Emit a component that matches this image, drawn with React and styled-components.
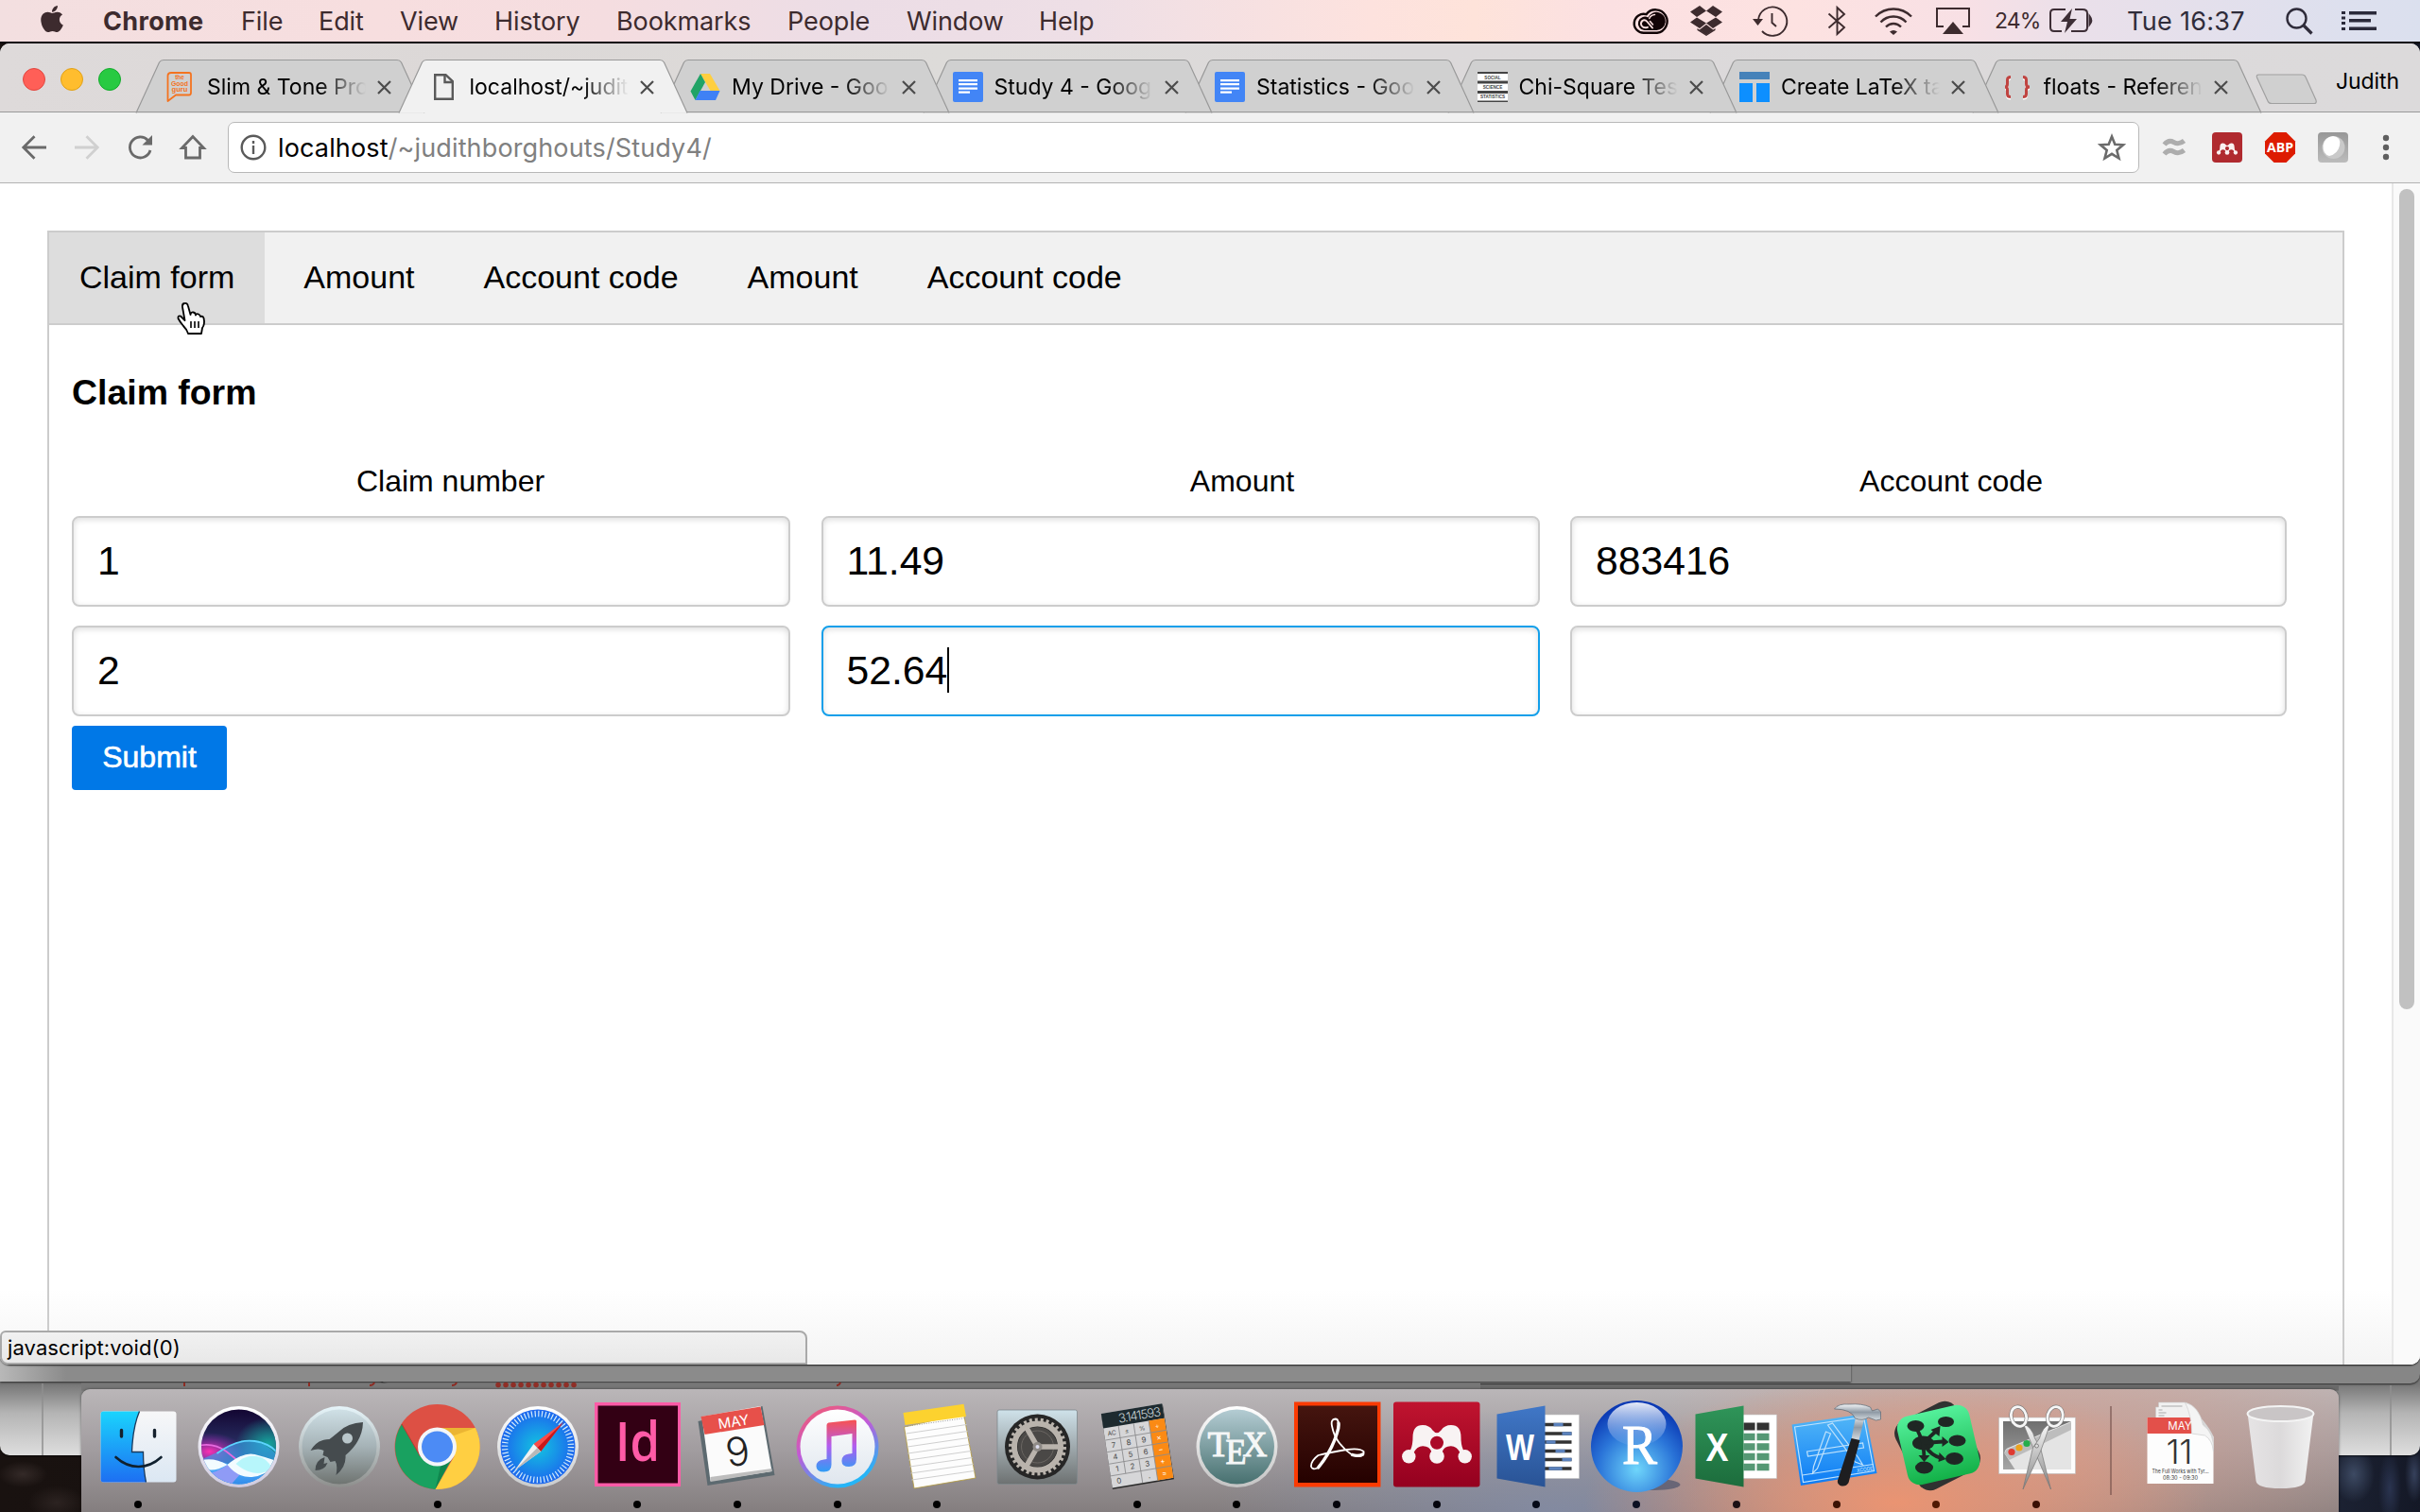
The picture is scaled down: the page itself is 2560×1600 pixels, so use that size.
import React from "react";
import styled, { createGlobalStyle, css } from "styled-components";
import { FaApple } from "react-icons/fa";

const UI_FONT = `Inter, "Noto Sans", sans-serif`;
const PAGE_FONT = `"Liberation Sans", Arial, sans-serif`;

const GlobalStyle = createGlobalStyle`
  html, body { margin: 0; padding: 0; overflow: hidden; }
  * { box-sizing: border-box; }
  svg { display: block; overflow: visible; }
`;

/* ---------- Desktop ---------- */

const Desktop = styled.div`
  position: relative;
  width: 2560px;
  height: 1600px;
  overflow: hidden;
  background:
    radial-gradient(ellipse 26px 14px at 24px 1560px, #342a28 0, transparent 100%),
    radial-gradient(ellipse 30px 18px at 60px 1590px, #2c2321 0, transparent 100%),
    radial-gradient(ellipse 22px 30px at 2490px 1560px, #3d4a63 0, transparent 100%),
    radial-gradient(ellipse 12px 40px at 2528px 1575px, #2a3450 0, transparent 100%),
    radial-gradient(ellipse 10px 30px at 2554px 1560px, #36415c 0, transparent 100%),
    linear-gradient(90deg, #191210 0, #120d0c 1280px, #1c2233 2470px, #141826 2560px);
`;

const BackWindow = styled.div`
  position: absolute;
  left: ${(p) => p.$x}px;
  top: 1300px;
  width: ${(p) => p.$w}px;
  height: ${(p) => p.$bottom - 1300}px;
  background: ${(p) => p.$bg};
  border-radius: ${(p) => p.$radius || "0 0 10px 10px"};
  box-shadow: 0 1px 2px rgba(0, 0, 0, 0.65);
`;

const Peek = styled.svg`
  position: absolute;
  left: 0;
  top: 1440px;
`;

const Window = styled.main`
  position: relative;
  width: 2560px;
  height: 1398px;
  display: flex;
  flex-direction: column;
  background: #fff;
  border-radius: 10px 10px 10px 10px;
  overflow: hidden;
`;

const WindowShade = styled.div`
  position: absolute;
  left: 0;
  top: 46px;
  width: 2560px;
  height: 1398px;
  border-radius: 10px;
  box-shadow: 0 1px 2px rgba(0, 0, 0, 0.8);
`;

/* ---------- Menu bar ---------- */

const MenuBar = styled.header`
  height: 46px;
  display: flex;
  align-items: center;
  border-bottom: 2px solid #08030a;
  background: linear-gradient(90deg, #f3dfe0 0, #f7dedf 400px, #f5dde0 640px, #ecdde6 900px, #eedfe6 1150px,
    #fde2de 1450px, #fee3da 1560px, #fbe0e2 1700px, #fde2e1 1900px, #f8e0e5 2080px, #eae0ea 2200px, #dde0ee 2480px, #dbe0ee 2560px);
  font: 27px/44px ${UI_FONT};
  color: #3d2b2e;
  white-space: nowrap;
`;

const AppleMark = styled.div`
  width: 109px;
  padding: 0 0 4px 39px;
  svg { width: 32px; height: 32px; }
`;

const MenuItem = styled.span`
  flex: none;
  width: ${(p) => p.$w}px;
  padding-top: 1px;
  letter-spacing: ${(p) => (p.$bold ? 0.35 : -0.1)}px;
  font-weight: ${(p) => (p.$bold ? 700 : 400)};
`;

const Extras = styled.div`
  margin-left: auto;
  padding-right: 30px;
  display: flex;
  align-items: center;
  height: 44px;
`;

const Extra = styled.div`
  flex: none;
  width: ${(p) => p.$w}px;
  display: flex;
  justify-content: center;
`;

const Percent = styled.span`
  width: 58px;
  padding-left: 8px;
  font-size: 23px;
  letter-spacing: -0.9px;
`;

const Clock = styled.span`
  width: 182px;
  padding: 1px 0 0 28px;
  color: #2f2c3a;
  letter-spacing: 0.3px;
`;

/* ---------- Tab strip ---------- */

const TabStrip = styled.div`
  flex: none;
  height: 73px;
  padding: 17px 0 0 144px;
  display: flex;
  position: relative;
  background: linear-gradient(90deg, #dedada 0, #dcd8d7 500px, #dddbd9 1000px, #dcd9da 1500px, #dcdadb 2560px);
  box-shadow: inset 0 -1px 0 #999;
`;

const Lights = styled.div`
  position: absolute;
  left: 24px;
  top: 26px;
  display: flex;
  gap: 16px;
`;

const Light = styled.i`
  width: 24px;
  height: 24px;
  border-radius: 50%;
  background: ${(p) => p.$c};
  border: 1px solid ${(p) => p.$b};
`;

const TabBox = styled.div`
  position: relative;
  flex: none;
  width: 305px;
  height: 56px;
  margin-right: -27.5px;
  padding-left: 31px;
  display: flex;
  align-items: center;
  z-index: ${(p) => p.$z};
`;

const TabShape = styled.svg`
  position: absolute;
  inset: 0;
`;

const TabIcon = styled.div`
  position: relative;
  width: 32px;
  height: 32px;
  margin: 2px 12px 0 0;
`;

const TabTitle = styled.span`
  position: relative;
  width: 171px;
  padding-top: 1px;
  white-space: nowrap;
  font: 23px/40px ${UI_FONT};
  letter-spacing: 0;
  color: #000;
  mask-image: linear-gradient(90deg, #000 118px, transparent 168px);
`;

const TabClose = styled.svg`
  position: relative;
  margin: 2px 0 0 9px;
`;

const NewTab = styled.svg`
  margin: 15px 0 0 22px;
`;

const Profile = styled.span`
  margin-left: auto;
  padding: 2px 22px 0 0;
  font: 23px/42px ${UI_FONT};
  letter-spacing: -0.1px;
`;

/* ---------- Toolbar ---------- */

const Toolbar = styled.div`
  flex: none;
  height: 75px;
  padding: 0 8px;
  display: flex;
  align-items: center;
  background: #f1f1f1;
  border-bottom: 1px solid #b3b3b3;
`;

const ToolButton = styled.div`
  flex: none;
  width: 56px;
  display: flex;
  justify-content: center;
`;

const Omnibox = styled.div`
  flex: none;
  width: 2022px;
  height: 54px;
  margin: 0 9px 0 9px;
  padding: 0 13px 0 12px;
  display: flex;
  align-items: center;
  background: #fff;
  border: 1.5px solid #b8b8b8;
  border-radius: 7px;
`;

const Address = styled.span`
  flex: 1;
  padding: 2px 0 0 12px;
  font: 27px/46px ${UI_FONT};
  letter-spacing: 0.14px;
  color: #000;
  em { font-style: normal; color: #808080; }
`;

/* ---------- Page ---------- */

const Viewport = styled.div`
  flex: 1;
  display: flex;
  background: linear-gradient(180deg, #fff 0, #fff 1170px, #f4f4f4 1250px);
`;

const Page = styled.div`
  width: 2530px;
  padding: 50px 0 0 50px;
  display: flex;
  flex-direction: column;
  font: 32px/40px ${PAGE_FONT};
  color: #000;
`;

const ScrollTrack = styled.div`
  width: 30px;
  padding: 6px 0 0 6px;
  border-left: 2px solid #e8e8e8;
  background: #fafafa;
`;

const ScrollThumb = styled.div`
  width: 16px;
  height: 868px;
  border-radius: 8px;
  background: #c1c1c1;
`;

const PageTabs = styled.nav`
  width: 2430px;
  height: 100px;
  display: flex;
  gap: 9px;
  border: 2px solid #ccc;
  background: #f1f1f1;
`;

const PageTab = styled.a`
  position: relative;
  height: 96px;
  padding: 0 32px;
  font-size: 34px;
  line-height: 95px;
  background: ${(p) => (p.$active ? "#ddd" : "transparent")};
`;

const HandCursor = styled.svg`
  position: absolute;
  left: 134px;
  top: 73px;
  z-index: 2;
`;

const Panel = styled.section`
  flex: 1;
  width: 2430px;
  padding: 49px 0 0 24px;
  border: 2px solid #ccc;
  border-width: 0 2px;
`;

const Title = styled.h3`
  margin: 0 0 52px;
  font-size: 37.44px;
  line-height: 44px;
  font-weight: 700;
`;

const HeadRow = styled.div`
  display: grid;
  grid-template-columns: 801px 874px 626px;
  height: 57px;
  text-align: center;
`;

const FieldGrid = styled.div`
  display: grid;
  grid-template-columns: 760px 760px 758px;
  column-gap: 32.5px;
  row-gap: 20px;
  margin-bottom: 10px;
`;

const Field = styled.div`
  height: 96px;
  padding: 0 25px 3px;
  display: flex;
  align-items: center;
  font-size: 42.67px;
  border: 2px solid #ccc;
  border-radius: 8px;
  box-shadow: inset 0 2px 6px #ddd;
  ${(p) => p.$focused && css`border-color: #129fea;`}
`;

const Caret = styled.i`
  width: 2px;
  height: 48px;
  background: #000;
`;

const Submit = styled.button`
  width: 164px;
  height: 68px;
  padding: 0 0 2px;
  border: 0;
  border-radius: 4px;
  background: #0078e7;
  color: #fff;
  font: 32px/64px ${PAGE_FONT};
  -webkit-text-stroke: 0.6px #fff;
`;

const StatusBubble = styled.div`
  position: absolute;
  left: 0;
  top: 1408px;
  width: 854px;
  height: 36px;
  padding-left: 6px;
  border: 2px solid #a9a9a9;
  border-radius: 6px 8px 0 8px;
  background: linear-gradient(180deg, #f1f1f1, #e8e8e8);
  font: 22px/33px ${UI_FONT};
  letter-spacing: 0.1px;
  color: #000;
`;

/* ---------- Dock ---------- */

const DockBar = styled.footer`
  position: absolute;
  left: 86px;
  top: 1470px;
  width: 2388px;
  height: 130px;
  padding-left: 7px;
  display: flex;
  border-radius: 9px 9px 0 0;
  background:
    radial-gradient(ellipse 330px 130px at 1920px 120px, #ea9472 0, rgba(228, 148, 118, 0.75) 35%, rgba(220, 160, 140, 0) 100%),
    radial-gradient(ellipse 420px 200px at 2080px 70px, rgba(214, 160, 145, 0.8) 0, rgba(214, 160, 145, 0) 100%),
    radial-gradient(ellipse 360px 110px at 1560px 130px, rgba(130, 142, 172, 0.75) 0, rgba(130, 142, 172, 0) 100%),
    linear-gradient(180deg, #bab6b8 0, #a19c9f 50%, #847e7f 100%);
  box-shadow: 0 0 3px rgba(0, 0, 0, 0.5);
`;

const DockItem = styled.div`
  flex: none;
  width: ${(p) => p.$w || 105.7}px;
  display: flex;
  flex-direction: column;
  align-items: center;
`;

const RunDot = styled.i`
  width: 8px;
  height: 8px;
  margin-top: 6px;
  border-radius: 50%;
  background: ${(p) => p.$c || "#000"};
`;

const Divider = styled.div`
  flex: none;
  width: 2px;
  height: 94px;
  margin: 18px 20px 0 24.8px;
  background: rgba(110, 75, 70, 0.55);
`;

/* ---------- Menu bar glyphs ---------- */

const CreativeCloud = () => (
  <svg width="38" height="27" viewBox="0 0 38 27" fill="none">
    <path d="M12 25.800H26A12.300 12.300 0 1 0 14.500 6.200 A10 10 0 1 0 12 25.800Z" stroke="#120406" strokeWidth="2.400" />
    <path d="M12.500 23H25.500A9.600 9.600 0 1 0 16.500 9.500 A7.200 7.200 0 1 0 12.500 23Z" fill="#120406" />
    <path d="M16 19.800Q12 21.300 9.800 18.500Q7.800 15.500 10.300 13Q13 11 15.500 14L21 20.500" stroke="#fde2e1" strokeWidth="1.900" strokeLinecap="round" />
    <path d="M17.800 10.500Q19.500 6.800 23.500 6.500" stroke="#fde2e1" strokeWidth="1.500" strokeLinecap="round" />
    <path d="M18.500 13.500L21.500 17" stroke="#fde2e1" strokeWidth="1.500" strokeLinecap="round" />
  </svg>
);

const Dropbox = () => (
  <svg width="34" height="32" viewBox="0 0 34 32" fill="#3d2b2e">
    <path d="M10 0L17 5.500 7 12 0 6.500Z M24 0L34 6.500 27 12 17 5.500Z M7 12.500L17 18.500 10 24 0 17.500Z M27 12.500L34 17.500 24 24 17 18.500Z M17 20L24.500 25.800 17 31 9.500 25.800Z" />
    <path d="M7.500 24L17 30.500 26.500 24V26L17 32 7.500 26Z" />
  </svg>
);

const TimeMachine = () => (
  <svg width="37" height="33" viewBox="0 0 37 33" fill="none" stroke="#3d2b2e" strokeWidth="1.900">
    <path d="M6 15A15.200 15.200 0 1 1 10 27" />
    <path d="M0 14H11L5.500 21Z" fill="#3d2b2e" stroke="none" />
    <path d="M20.500 8V18L25 22" />
  </svg>
);

const BluetoothGlyph = () => (
  <svg width="18" height="32" viewBox="0 0 18 32" fill="none" stroke="#3d2b2e" strokeWidth="1.900">
    <path d="M0.500 8.500L17 23 9.500 30V2L17 9 0.500 23.500" />
  </svg>
);

const WifiGlyph = () => (
  <svg width="40" height="29" viewBox="0 0 40 29" fill="none" stroke="#3d2b2e" strokeWidth="2.400">
    <path d="M1 9.500Q9 1.500 20 1.500T39 9.500" />
    <path d="M6.500 15.500Q12 9.500 20 9.500T33.500 15.500" />
    <path d="M12 20.500Q15.500 17 20 17T28 20.500" />
    <path d="M16 25.500Q20 22.500 24 25.500L20 29Z" fill="#3d2b2e" stroke="none" />
  </svg>
);

const AirPlay = () => (
  <svg width="36" height="28" viewBox="0 0 36 28">
    <path d="M8 20H1V1H35V20H28" fill="none" stroke="#3d2b2e" strokeWidth="2" />
    <path d="M18 15L29 28H7Z" fill="#3d2b2e" />
  </svg>
);

const Battery = () => (
  <svg width="46" height="26" viewBox="0 0 46 26" fill="none" stroke="#3d2e36" strokeWidth="2">
    <path d="M17 1H5Q1 1 1 5V20Q1 24 5 24H13M27 1H35Q40 1 40 5V20Q40 24 36 24H23" />
    <path d="M42.500 8Q46 12.500 42.500 17Z" fill="#3d2e36" />
    <path d="M24 0L12 14H19L16 26L29 11H21.500Z" fill="#3d2e36" stroke="none" />
  </svg>
);

const SearchGlyph = () => (
  <svg width="29" height="29" viewBox="0 0 29 29" fill="none" stroke="#2f2c3a" strokeWidth="2.400">
    <circle cx="11.500" cy="11.500" r="10" />
    <path d="M18.500 18.500L27.500 27.500" strokeWidth="3.200" />
  </svg>
);

const ListGlyph = () => (
  <svg width="37" height="20" viewBox="0 0 37 20" fill="#2a2a3a">
    <path d="M0 0H4V3H0Z M0 5.500H4V8.500H0Z M0 11H4V14H0Z M0 17H4V20H0Z M8 0H37V3.500H8Z M8 8H31V11.500H8Z M8 16.500H37V20H8Z" />
  </svg>
);

/* ---------- Browser glyphs ---------- */

const GoodGuru = () => (
  <svg width="32" height="32" viewBox="0 0 32 32">
    <path d="M6 1H25Q27 1 27 3V22Q27 24.500 25 24.500H11L2.500 31V4Q2.500 1 6 1Z" fill="none" stroke="#f4731f" strokeWidth="1.800" strokeLinejoin="round" />
    <g fill="#f4731f" fontFamily={PAGE_FONT} fontWeight="700" textAnchor="middle">
      <text x="15" y="8.200" fontSize="6.500">the</text>
      <text x="15" y="14.500" fontSize="7.500" textLength="18" lengthAdjust="spacingAndGlyphs">Good</text>
      <text x="15" y="20.500" fontSize="8" textLength="17" lengthAdjust="spacingAndGlyphs">guru</text>
    </g>
  </svg>
);

const FileGlyph = () => (
  <svg width="32" height="32" viewBox="0 0 32 32" fill="none" stroke="#5a5a5a" strokeWidth="2.400">
    <path d="M7.200 3.200H18.500L25.800 10V28.800H7.200Z" />
    <path d="M17.500 3.500V11H25.500" />
  </svg>
);

const DriveGlyph = () => (
  <svg width="32" height="32" viewBox="0 0 32 32">
    <path d="M11 2H21L31.500 20H21.500Z" fill="#ffcf3f" />
    <path d="M11 2L0.500 20.500 5.500 30 16 11Z" fill="#21a366" />
    <path d="M10.500 20H31.500L27 30H5.500Z" fill="#3f81f5" />
  </svg>
);

const DocsGlyph = () => (
  <svg width="32" height="32" viewBox="0 0 32 32">
    <rect width="32" height="32" rx="2" fill="#4285f6" />
    <path d="M6 8H26V10.200H6ZM6 12H26V14.200H6ZM6 16.500H26V18.700H6ZM6 20.500H18V22.700H6Z" fill="#fff" />
  </svg>
);

const SocialScience = () => (
  <svg width="32" height="32" viewBox="0 0 32 32">
    <rect width="32" height="32" fill="#fff" />
    <path d="M0 0H32V2H0ZM0 9.500H32V12.500H0ZM0 20H32V23H0ZM0 30.500H32V32H0Z" fill="#444" />
    <g fill="#444" fontFamily={PAGE_FONT} fontWeight="700" textAnchor="middle" fontSize="4.600">
      <text x="16" y="7.600">SOCIAL</text>
      <text x="16" y="18">SCIENCE</text>
      <text x="16" y="28.400">STATISTICS</text>
    </g>
  </svg>
);

const TablesGlyph = () => (
  <svg width="32" height="32" viewBox="0 0 32 32">
    <rect width="32" height="8" fill="#4682b9" />
    <rect y="12" width="14" height="20" fill="#0d8fff" />
    <rect x="18" y="12" width="14" height="20" fill="#0d8fff" />
  </svg>
);

const Braces = () => (
  <svg width="32" height="32" viewBox="0 0 32 32" fill="none" strokeWidth="3">
    <g stroke="#fff" transform="translate(0 1.500)">
      <path d="M9 5.500Q5.500 5.500 5.500 8.500V13Q5.500 16 3 16Q5.500 16 5.500 19V23.500Q5.500 26.500 9 26.500" />
      <path d="M22 5.500Q25.500 5.500 25.500 8.500V13Q25.500 16 29 16Q25.500 16 25.500 19V23.500Q25.500 26.500 22 26.500" />
    </g>
    <g stroke="#c04441">
      <path d="M9 5.500Q5.500 5.500 5.500 8.500V13Q5.500 16 3 16Q5.500 16 5.500 19V23.500Q5.500 26.500 9 26.500" />
      <path d="M22 5.500Q25.500 5.500 25.500 8.500V13Q25.500 16 29 16Q25.500 16 25.500 19V23.500Q25.500 26.500 22 26.500" />
    </g>
  </svg>
);

const Arrow = ({ flip, color }) => (
  <svg width="26" height="26" viewBox="0 0 26 26" fill="none" stroke={color} strokeWidth="2.800" transform={flip ? "scale(-1 1)" : undefined}>
    <path d="M13.500 1.200L1.800 13 13.500 24.800M1.800 13H26" />
  </svg>
);

const Reload = () => (
  <svg width="28" height="28" viewBox="0 0 28 28">
    <path d="M22.500 6.500A11 11 0 1 0 25 17" fill="none" stroke="#6a6a6a" strokeWidth="2.800" />
    <path d="M27 1V11.500H16.500Z" fill="#6a6a6a" />
  </svg>
);

const Home = () => (
  <svg width="28" height="28" viewBox="0 0 28 28" fill="none" stroke="#6a6a6a" strokeWidth="2.800">
    <path d="M14 2.500L2.500 14.500H6.500V25H21.500V14.500H25.500Z" />
  </svg>
);

const Info = () => (
  <svg width="28" height="28" viewBox="0 0 28 28" fill="none" stroke="#5a5a5a" strokeWidth="2.400">
    <circle cx="14" cy="14" r="12.300" />
    <path d="M14 12V21M14 7V10" />
  </svg>
);

const Star = () => (
  <svg width="30" height="30" viewBox="0 0 30 30" fill="none" stroke="#6b6b6b" strokeWidth="2.600">
    <path d="M15 3.500L18.300 11.700 27 12.300 20.300 18 22.500 26.500 15 21.800 7.500 26.500 9.700 18 3 12.300 11.700 11.700Z" />
  </svg>
);

const Waves = () => (
  <svg width="24" height="22" viewBox="0 0 24 22" fill="none" stroke="#adadad" strokeWidth="5">
    <path d="M1.500 8Q6 2.500 11.500 5.500T22.500 4" />
    <path d="M1.500 18Q6 12.500 11.500 15.500T22.500 14" />
  </svg>
);

const MendeleyMark = ({ fill, hole }) => (
  <g>
    <path
      d="M-25.500 -7Q-25.500 -20-15 -20Q-8 -20-4.500 -14.500Q0 -9 4.500 -14.500Q8 -20 15 -20Q25.500 -20 25.500 -7Q25.500 3 29 8L24.500 9Q21 2.500 15 2.200Q8 2 5.500 8.500H-5.500Q-8 2-15 2.200Q-21 2.500-24.500 9L-29 8Q-25.500 3-25.500 -7Z"
      fill={fill}
    />
    <circle cx="-29.700" cy="13.300" r="7.200" fill={fill} />
    <circle cx="0" cy="13" r="7.800" fill={fill} />
    <circle cx="29.700" cy="13.300" r="7.200" fill={fill} />
    <circle cx="0" cy="-1.300" r="7" fill={hole} />
  </g>
);

const MendeleyExt = () => (
  <svg width="32" height="32" viewBox="0 0 32 32">
    <rect width="32" height="32" rx="4" fill="#b02a2f" />
    <g transform="translate(16 17.500) scale(0.300)"><MendeleyMark fill="#faf0f0" hole="#b02a2f" /></g>
  </svg>
);

const AdblockExt = () => (
  <svg width="32" height="32" viewBox="0 0 32 32">
    <path d="M9.500 0H22.500L32 9.500V22.500L22.500 32H9.500L0 22.500V9.500Z" fill="#dd1c00" />
    <text x="16" y="21.300" textAnchor="middle" fontFamily={`"Open Sans", sans-serif`} fontWeight="700" fontSize="14.500" fill="#fff" textLength="28" lengthAdjust="spacingAndGlyphs">ABP</text>
  </svg>
);

const GhostExt = () => (
  <svg width="32" height="32" viewBox="0 0 32 32">
    <defs>
      <linearGradient id="ghost" x1="0" y1="0" x2="0" y2="1">
        <stop offset="0" stopColor="#979797" /><stop offset="1" stopColor="#bcbcbc" />
      </linearGradient>
    </defs>
    <rect width="32" height="32" rx="4" fill="url(#ghost)" />
    <circle cx="16.500" cy="16" r="12" fill="#c9c9c9" />
    <path d="M16 4Q25 5 23 14Q21 23 12 25Q5 23 5.500 14Q7 5 16 4Z" fill="#fff" />
  </svg>
);

const Kebab = () => (
  <svg width="8" height="28" viewBox="0 0 8 28" fill="#5f5f5f">
    <circle cx="4" cy="4" r="3.200" /><circle cx="4" cy="14" r="3.200" /><circle cx="4" cy="24" r="3.200" />
  </svg>
);

/* ---------- Dock icons, drawn round x = 0 with y measured from the dock's top ---------- */

const Art = ({ children }) => (
  <svg width="105" height="112" viewBox="-52.500 0 105 112">{children}</svg>
);

const Grad = ({ id, from, to, mid, x2 = 0, y2 = 1 }) => (
  <linearGradient id={id} x1="0" y1="0" x2={x2} y2={y2}>
    <stop offset="0" stopColor={from} />
    {mid && <stop offset="0.5" stopColor={mid} />}
    <stop offset="1" stopColor={to} />
  </linearGradient>
);

const Finder = () => (
  <Art>
    <defs><Grad id="fin" from="#1ad4fd" to="#1d6ff2" /><Grad id="fin2" from="#f7f7f8" to="#dbe7f3" /></defs>
    <rect x="-39" y="23.500" width="80" height="75" rx="3" fill="url(#fin2)" />
    <path d="M2 23.500H-36Q-39 23.500-39 26.500V95.500Q-39 98.500-36 98.500H9Q6 84 6 66.500H-6Q-5 40 2 23.500Z" fill="url(#fin)" />
    <path d="M2 23.500Q-5 40-6 66.500H6Q6 84 9 98.500" fill="none" stroke="#1b3a5c" strokeWidth="1.300" />
    <path d="M-17 43.500V50M18 43.500V50" stroke="#15202c" strokeWidth="3.400" strokeLinecap="round" />
    <path d="M-23 72Q-12 82 1 82T25 72" fill="none" stroke="#10202e" strokeWidth="2.600" strokeLinecap="round" />
  </Art>
);

const Siri = () => (
  <Art>
    <defs>
      <Grad id="siri" from="#120430" mid="#2a3266" to="#2f9be0" />
      <Grad id="siriRim" from="#ffffff" to="#cfcbe0" />
      <radialGradient id="siriTeal"><stop offset="0" stopColor="#14a59d" /><stop offset="1" stopColor="#14a59d" stopOpacity="0" /></radialGradient>
      <radialGradient id="siriPink"><stop offset="0" stopColor="#ff2fb0" /><stop offset="1" stopColor="#a02ad0" stopOpacity="0" /></radialGradient>
      <Grad id="siriWave" from="#5ab8ff" to="#2c86e8" />
      <clipPath id="siriClip"><circle cx="1" cy="61" r="39.500" /></clipPath>
    </defs>
    <circle cx="1" cy="61" r="43" fill="url(#siriRim)" />
    <g clipPath="url(#siriClip)">
      <rect x="-42" y="20" width="86" height="84" fill="url(#siri)" />
      <ellipse cx="32" cy="58" rx="34" ry="28" fill="url(#siriTeal)" />
      <ellipse cx="-30" cy="66" rx="36" ry="20" fill="url(#siriPink)" />
      <path d="M-20 66Q-2 54 14 55T44 72V104H-42V76Z" fill="#38a3ee" opacity="0.600" />
      <path d="M-42 60Q-26 56-12 66T12 90" fill="none" stroke="#e66adf" strokeWidth="1.600" />
      <path d="M-22 68Q0 52 18 55T44 70" fill="none" stroke="#5cd3ff" strokeWidth="1.800" />
      <path d="M-42 80Q-22 74-8 80T12 92Q30 94 44 78V104H-42Z" fill="url(#siriWave)" />
      <path d="M-42 92Q-20 88-11 80L6 86L-8 102L-42 104Z" fill="#8f9bf6" />
      <path d="M-42 76Q-26 71-11 80Q6 66 18 69T44 77Q30 92 15 93T-11 80Q-30 91-42 80Z" fill="#f2fbff" />
      <path d="M-2 79Q8 69 20 71T36 84Q18 96-2 79Z" fill="#b7f6fb" />
    </g>
  </Art>
);

const Launchpad = () => (
  <Art>
    <defs><Grad id="lp" from="#cfe0e6" mid="#a5b2b6" to="#6f7471" /><Grad id="lpRim" from="#e6f5fa" to="#8e8f8d" /></defs>
    <circle cx="1.500" cy="61" r="43" fill="url(#lpRim)" />
    <circle cx="1.500" cy="61" r="39.500" fill="url(#lp)" />
    <g fill="#454b4e">
      <path d="M26.500 35Q10 36 1 45Q-5 50-9 53Q-22 53-29 65Q-20 62-15 65L-16 70L-11 72L-8 77L-3 76Q0 80-2 91Q9 82 8 70Q26 55 26.500 35Z" />
      <path d="M-14 72Q-24 75-24 86Q-14 86-11 78L-15 79Z" />
    </g>
    <circle cx="10" cy="52" r="5.500" fill="#b9c6ca" />
  </Art>
);

const Chrome = () => (
  <Art>
    <g transform="translate(0 61)">
      <circle r="45" fill="#dd5044" />
      <path d="M-37.500 -24A45 45 0 0 0 -2 45L17 10L-18 10Z" fill="#19a160" />
      <path d="M-2 45A45 45 0 0 0 40.500 -20H2L18 10Z" fill="#ffcf42" />
      <path d="M-37.500 -24L-18 10" stroke="#b53b32" strokeWidth="1" />
      <path d="M40.500 -20H0L18 -12Z" fill="#e3a92d" opacity="0.700" />
      <path d="M-2 45L15 12L4 18Z" fill="#0e8048" opacity="0.800" />
      <circle r="20.500" fill="#f4f6f8" />
      <circle r="16.500" fill="#4c8bf5" />
    </g>
  </Art>
);

const Safari = () => (
  <Art>
    <defs>
      <radialGradient id="saf"><stop offset="0" stopColor="#13c4e0" /><stop offset="1" stopColor="#1c66ee" /></radialGradient>
      <Grad id="safRim" from="#fff" to="#c9cbcc" />
    </defs>
    <circle cx="0.500" cy="61" r="43" fill="url(#safRim)" />
    <circle cx="0.500" cy="61" r="39.500" fill="url(#saf)" />
    <circle cx="0.500" cy="61" r="35" fill="none" stroke="#d6ecfb" strokeWidth="6.500" strokeDasharray="1.200 2.465" />
    <path d="M27.500 35L3.500 66L-4 58Z" fill="#fb4b47" />
    <path d="M27.500 35L3.500 66L0 62Z" fill="#c9171b" />
    <path d="M-24 86L-4 58L3.500 66Z" fill="#f1f1f1" />
    <path d="M-24 86L0 62L3.500 66Z" fill="#b8b8b8" />
  </Art>
);

const InDesign = () => (
  <Art>
    <rect x="-45.500" y="14" width="91" height="89" fill="#ff5ba7" />
    <rect x="-42" y="17.500" width="84.500" height="82" fill="#330014" />
    <text x="0" y="76" textAnchor="middle" fill="#ff5ba7" fontFamily={`"Open Sans", "Noto Sans", sans-serif`} fontWeight="600" fontSize="57" textLength="47" lengthAdjust="spacingAndGlyphs">Id</text>
  </Art>
);

const Calendar = () => (
  <Art>
    <path d="M-41 34L27 18L40 91L-31 102Z" fill="#5d6a70" />
    <path d="M-37 29L25 18L37 87L-28 97Z" fill="#fbfbfb" />
    <path d="M-38 29L25 18.500L29 38L-34 48Z" fill="#e7504a" />
    <path d="M-28 93L37 84V87L-28 98Z" fill="#bdbdbd" />
    <g fontFamily={UI_FONT} textAnchor="middle" transform="rotate(-9 0 60)">
      <text x="0.500" y="39.500" fontSize="15" fill="#fff">MAY</text>
      <text x="0" y="81" fontSize="42" fontWeight="300" fill="#222">9</text>
    </g>
  </Art>
);

const ITunes = () => (
  <Art>
    <defs>
      <Grad id="itRim" from="#fb5a5e" mid="#c15ad8" to="#25b5f7" x2={0.5} />
      <Grad id="itNote" from="#f8524f" mid="#b25cf0" to="#2f9df5" />
      <Grad id="itIn" from="#fff" to="#dfe6ee" />
    </defs>
    <circle cx="0.500" cy="61" r="43.500" fill="url(#itRim)" />
    <circle cx="0.500" cy="61" r="39.500" fill="url(#itIn)" />
    <path d="M-11 38Q-11 36-9 35.500L19 32.500Q20.500 32.500 20.500 34V74Q20.500 82 12.500 82T5 75.500T12.500 68.500L16 68V47L-6 50V80Q-6 87.500-14 87.500T-22 81.500T-14 74.500L-11 74Z" fill="url(#itNote)" />
  </Art>
);

const Notes = () => (
  <Art>
    <path d="M-35 40L28 26L40.500 94L-24.500 105Z" fill="#fdfdfd" stroke="#b49b3a" strokeWidth="0.800" />
    <path d="M-36 25L28 15.700L30.500 29L-34 38Z" fill="#fcd22f" />
    <path d="M-34 39.500L30 30.500" stroke="#999" strokeWidth="1" strokeDasharray="1 1.500" />
    <path d="M-33 47L31 37.500M-32 54L32 44.500M-31.500 61L33 51.500M-31 68L34 58.500M-30 75L35.500 65.500M-29 82L37 72.500M-28 89L38 79.500M-27 96L39 86.500" stroke="#cfcfcf" strokeWidth="1" />
  </Art>
);

const Preferences = () => (
  <Art>
    <defs><Grad id="sp" from="#cfe2ea" mid="#9fa9ad" to="#6d7171" /></defs>
    <rect x="-42.500" y="22" width="84.500" height="78.500" rx="2" fill="url(#sp)" stroke="#7f898d" strokeWidth="0.800" />
    <circle cx="0" cy="61" r="34.500" fill="#262626" />
    <g transform="translate(0 61)" fill="none">
      <circle r="28.500" stroke="#b9b3ac" strokeWidth="4" strokeDasharray="3 2.970" />
      <circle r="24.500" stroke="#b9b3ac" strokeWidth="6" />
      <circle r="21" fill="#4a4846" />
      <circle r="17" stroke="#6a6662" strokeWidth="1" />
      <path d="M0 0H23M0 0L-11.500 -20M0 0L-11.500 20" stroke="#b9b3ac" strokeWidth="5.500" />
      <circle r="5" fill="#8e8a86" />
      <circle r="2" fill="#dde" />
    </g>
  </Art>
);

/* Keypad is laid out square on a 64 x 79 sheet, then skewed onto the icon's tilt. */
const Calculator = () => {
  const keys = [["AC", "±", "%", "÷"], ["7", "8", "9", "×"], ["4", "5", "6", "−"], ["1", "2", "3", "+"], ["0", "", ".", "="]];
  return (
    <Art>
      <g transform="matrix(1 -0.167 0.152 1 -37.700 26)" fontFamily={UI_FONT}>
        <rect x="0" y="1" width="65" height="79" fill="#2a2a2a" />
        <rect width="64.500" height="78.500" fill="#d6d6d8" />
        <rect width="64.500" height="15.500" fill="#1d2a2f" />
        <rect x="48" y="15.500" width="16.500" height="63" fill="#fb8a14" />
        <path d="M0 28.100H64.500M0 40.700H64.500M0 53.300H64.500M0 65.900H64.500M16 15.500V65.900M32 15.500V78.500M48 15.500V78.500" stroke="#8a8a8c" strokeWidth="0.800" />
        <text x="62" y="12.500" textAnchor="end" fontSize="13" fill="#c6d0d3" fontWeight="300" textLength="45">3.141593</text>
        {keys.map((row, r) => row.map((k, c) => (k && (
          <text
            key={`${r}-${c}`}
            x={8 + c * 16}
            y={24.500 + r * 12.600 + (k.length > 1 ? -0.500 : 0)}
            textAnchor="middle"
            fontSize={k === "AC" || r === 0 ? 6.500 : 7.800}
            fill={c === 3 ? "#fff" : "#4a4a4a"}
          >
            {k}
          </text>
        ))))}
      </g>
    </Art>
  );
};

const TeX = () => (
  <Art>
    <defs><Grad id="tex" from="#b4ccd3" to="#47706f" /><Grad id="texRim" from="#fff" to="#c3c3c3" /></defs>
    <circle cx="0" cy="61" r="43" fill="url(#texRim)" />
    <circle cx="0" cy="61" r="39.500" fill="url(#tex)" />
    <g fill="#f5f7f7" stroke="#f5f7f7" strokeWidth="1.100" fontFamily={`"Liberation Serif", serif`} fontSize="38">
      <text x="-31" y="70.500">T</text>
      <text x="-12" y="78.500" textLength="22" lengthAdjust="spacingAndGlyphs">E</text>
      <text x="6" y="70.500" textLength="26" lengthAdjust="spacingAndGlyphs">X</text>
    </g>
  </Art>
);

const Acrobat = () => (
  <Art>
    <defs><Grad id="acr" from="#45150f" to="#250100" /></defs>
    <rect x="-45.500" y="13.500" width="91.500" height="90" fill="#fb3b04" />
    <rect x="-41.500" y="17.500" width="84" height="81.500" fill="url(#acr)" />
    <g fill="none" stroke="#fff" strokeLinecap="round">
      <path d="M-2 31.500Q-7 32-5.500 39Q-3 52 5 60Q14 71 23 71Q29 70.500 28 66Q24 62 10 64Q-8 67-20 70Q-28 76-27.500 82Q-26 86-20 83Q-6 66-0 46Q3.500 31.500-2 31.500Z" strokeWidth="1.800" />
      <path d="M-20 83Q-6 66 0 46Q2 40 1.500 36M16 69.500Q22 71.500 27 69" strokeWidth="3.400" />
    </g>
  </Art>
);

const Mendeley = () => (
  <Art>
    <defs><Grad id="men" from="#c0142f" to="#94001f" /></defs>
    <rect x="-45.500" y="13.500" width="91.500" height="90" rx="3" fill="url(#men)" />
    <g transform="translate(0.500 58)"><MendeleyMark fill="#f8f3f3" hole="#ab0a28" /></g>
  </Art>
);

const Word = () => (
  <Art>
    <defs><Grad id="wd" from="#4077c7" to="#295395" /></defs>
    <rect x="4" y="27" width="41" height="67.500" fill="#fff" stroke="#c4c4c4" strokeWidth="0.600" />
    <path d="M8 37.500H37M8 47H37M8 56H37M8 65.500H37M8 74.500H37M8 84H37" stroke="#333" strokeWidth="3.500" />
    <path d="M18 37.500H28M27 47H37M10 56H20M20 65.500H30M27 74.500H37M13 84H27" stroke="#5b82bd" strokeWidth="3.500" />
    <path d="M-42 26.500L9 17.500V103.500L-42 94.500Z" fill="url(#wd)" />
    <text x="-17.500" y="75" textAnchor="middle" fill="#fff" fontFamily={PAGE_FONT} fontWeight="700" fontSize="39" textLength="30" lengthAdjust="spacingAndGlyphs">W</text>
  </Art>
);

const RLogo = () => (
  <Art>
    <defs>
      <radialGradient id="rl" cx="0.500" cy="0.750" r="0.700">
        <stop offset="0" stopColor="#6fd6fb" /><stop offset="0.600" stopColor="#2a74d8" /><stop offset="1" stopColor="#0b39b4" />
      </radialGradient>
      <Grad id="rShine" from="#fff" to="rgba(160,190,240,0.15)" />
    </defs>
    <ellipse cx="18" cy="101" rx="28" ry="6" fill="#3e4a66" opacity="0.600" />
    <circle cx="0" cy="60.500" r="48.500" fill="url(#rl)" />
    <ellipse cx="0" cy="37" rx="31" ry="23" fill="url(#rShine)" opacity="0.900" />
    <text x="3" y="79" textAnchor="middle" fill="#fff" stroke="#fff" strokeWidth="1" fontFamily={`"Liberation Serif", serif`} fontSize="60" textLength="37" lengthAdjust="spacingAndGlyphs">R</text>
  </Art>
);

const Excel = () => (
  <Art>
    <defs><Grad id="xl" from="#2f9559" to="#1c6c3c" /></defs>
    <rect x="4" y="27" width="39" height="67.500" fill="#fff" stroke="#c4c4c4" strokeWidth="0.600" />
    <path d="M8 39.500H20M22 39.500H35" stroke="#333" strokeWidth="8" />
    <path d="M8 50.500H20M22 50.500H35M8 61H20M22 61H35M8 71.500H20M22 71.500H35M8 82.500H20M22 82.500H35" stroke="#559874" strokeWidth="7.500" />
    <path d="M-43 26.500L8 17.500V103.500L-43 94.500Z" fill="url(#xl)" />
    <text x="-20" y="76" textAnchor="middle" fill="#fff" fontFamily={PAGE_FONT} fontWeight="700" fontSize="42" textLength="24" lengthAdjust="spacingAndGlyphs">X</text>
  </Art>
);

const Xcode = () => (
  <Art>
    <defs><Grad id="xc" from="#54b8f7" to="#0b7bf5" /><Grad id="ham" from="#f5f7f9" mid="#8f9aa5" to="#d5dbe0" /></defs>
    <path d="M-47 37.500L31 26L43 89L-37.500 102Z" fill="url(#xc)" />
    <g fill="none" stroke="#bfe2fc" strokeWidth="1.200">
      <path d="M-44 40L29 29.500L40 86.500L-35 98.500Z" />
      <path d="M-36 91L39 79.500" />
      <path d="M-31 66L28 57L29 62L-30 71Z" />
      <path d="M-11 45L-6 47L-20 84L-25 89L-24 82Z" />
      <path d="M-9 38L-4 36L23 72L28 80L20 77Z" />
    </g>
    <text x="22" y="88" fontFamily={UI_FONT} fontSize="5.500" fill="#d8eefd" transform="rotate(-8 22 88)" textLength="17" lengthAdjust="spacingAndGlyphs">XCODE</text>
    <path d="M21 27L30 30L24 54L16 53Z" fill="url(#ham)" />
    <path d="M16 52L25 54L13 99Q10 104 4 102Q0 100 2 95Z" fill="#1e1e20" />
    <path d="M-2 21Q2 15 14 16Q27 15 36 19L38 23L44 21L47 24V32L42 33L34 30Q28 34 20 31Q16 21-2 21Z" fill="url(#ham)" stroke="#66707a" strokeWidth="0.800" />
  </Art>
);

const OmniGraffle = () => (
  <Art>
    <defs><Grad id="og" from="#54f09b" to="#13b148" /></defs>
    <rect x="-35" y="20" width="72" height="80" rx="14" fill="#303231" transform="rotate(-27 1 60)" />
    <rect x="-37" y="22" width="78" height="74" rx="13" fill="url(#og)" transform="rotate(-13 2 58.500)" />
    <g fill="#1f2724">
      <ellipse cx="-22" cy="39" rx="9" ry="6" /><ellipse cx="10" cy="34.500" rx="8.500" ry="5.500" />
      <ellipse cx="-14" cy="57" rx="11.500" ry="7.500" /><ellipse cx="22" cy="54.500" rx="9" ry="6" />
      <ellipse cx="19" cy="73.500" rx="9.500" ry="6.500" /><ellipse cx="-13" cy="83" rx="9.500" ry="6.500" />
      <path d="M4 39L3 50L-6 43ZM13 56L6 50V61ZM10 74L3 67L2 77ZM-13 77L-19 70H-7Z" />
    </g>
    <path d="M-22 39L-14 57L0 44M-14 57L7 55.500M-14 57L-13 73M-12 60Q-6 70 5 73" stroke="#1f2724" strokeWidth="3.800" fill="none" />
  </Art>
);

const Grab = () => (
  <Art>
    <defs><Grad id="gr" from="#6f6f6f" to="#a5a5a5" /><Grad id="blade" from="#f8f8f8" to="#858585" /></defs>
    <rect x="-39" y="30" width="81" height="59.500" fill="#fdfdfd" stroke="#bbb" strokeWidth="0.600" />
    <rect x="-34.500" y="34" width="72" height="51" fill="url(#gr)" />
    <path d="M-33 68Q-33 64-30 62.500L37.500 34V85H-22Z" fill="#e4e4e4" />
    <path d="M-31 64L37.500 35V43L-28 75L-33 68Z" fill="#bdbdbd" />
    <circle cx="-25.500" cy="66.500" r="3.600" fill="#e03a31" /><circle cx="-17.500" cy="62" r="3.600" fill="#eda31c" /><circle cx="-9.500" cy="57.500" r="3.600" fill="#25ad4b" />
    <path d="M-13 37Q-4 40-1 52L5 62L16 106L-1 66Q-8 50-13 37Z" fill="url(#blade)" stroke="#777" strokeWidth="0.700" />
    <path d="M15 37Q7 40 4 52L-3 62L-13.500 106L5 66Q11 50 15 37Z" fill="url(#blade)" stroke="#777" strokeWidth="0.700" />
    <g fill="none">
      <ellipse cx="-18" cy="29" rx="8" ry="10.500" transform="rotate(-15 -18 29)" stroke="#7a7a7a" strokeWidth="4" />
      <ellipse cx="20.500" cy="29" rx="8" ry="10.500" transform="rotate(15 20.500 29)" stroke="#7a7a7a" strokeWidth="4" />
      <ellipse cx="-18" cy="29" rx="8" ry="10.500" transform="rotate(-15 -18 29)" stroke="#f6f6f6" strokeWidth="2.800" />
      <ellipse cx="20.500" cy="29" rx="8" ry="10.500" transform="rotate(15 20.500 29)" stroke="#f6f6f6" strokeWidth="2.800" />
    </g>
    <circle cx="1" cy="60" r="2" fill="#ddd" stroke="#666" strokeWidth="0.700" />
  </Art>
);

const CalendarDoc = () => (
  <Art>
    <path d="M-23 14H5L30 46V60H-26V19H-23Z" fill="#f1f1f1" stroke="#c9c9c9" strokeWidth="0.600" />
    <path d="M-20 18H2M-23 22H-19M-23 25H-15M-23 28H-17" stroke="#aaa" strokeWidth="1" />
    <path d="M-35 30H12V47L35 50V100H-35Z" fill="#fdfdfd" />
    <path d="M-35 30H12V47H-35Z" fill="#e3504a" />
    <path d="M5 14Q15 16 21 30Q24 38 26 42Q34 52 35 62V50Q28 34 5 14Z" fill="#d6d6d6" />
    <path d="M5 14Q12 28 12 47L26 49Q34 54 35 66Q36 46 24 38Q20 18 5 14Z" fill="#f4f4f4" stroke="#cfcfcf" strokeWidth="0.700" />
    <g fontFamily={UI_FONT} textAnchor="middle">
      <text x="-0.500" y="42.500" fontSize="11.500" fill="#fff">MAY</text>
      <text x="-1" y="78.500" fontSize="36" fontWeight="300" fill="#333" textLength="28">11</text>
      <text x="0" y="89" fontSize="5.600" fill="#333" textLength="60" lengthAdjust="spacingAndGlyphs">The Full Works with Tyr…</text>
      <text x="0" y="96" fontSize="5.600" fill="#333">08:30 - 09:30</text>
    </g>
  </Art>
);

const Trash = () => (
  <Art>
    <defs><Grad id="tr" from="#e6e4e5" to="#f2f2f2" mid="#dcdadb" x2={1} y2={0} /></defs>
    <path d="M-35 25L-26 97Q-25 105 0 105T26 97L35 25Z" fill="url(#tr)" />
    <ellipse cx="0" cy="26" rx="35" ry="8" fill="#c9c5c6" stroke="#f4f4f4" strokeWidth="2" />
  </Art>
);

/* ---------- Data ---------- */

const MENUS = [
  ["Chrome", 146, true], ["File", 82], ["Edit", 86], ["View", 100], ["History", 129],
  ["Bookmarks", 181], ["People", 126], ["Window", 140], ["Help", 90],
];

const TABS = [
  { title: "Slim & Tone Pro", Icon: GoodGuru },
  { title: "localhost/~judit", Icon: FileGlyph, active: true },
  { title: "My Drive - Goo", Icon: DriveGlyph },
  { title: "Study 4 - Goog", Icon: DocsGlyph },
  { title: "Statistics - Goo", Icon: DocsGlyph },
  { title: "Chi-Square Tes", Icon: SocialScience },
  { title: "Create LaTeX ta", Icon: TablesGlyph },
  { title: "floats - Referen", Icon: Braces },
];

const ROWS = [
  [{ v: "1" }, { v: "11.49" }, { v: "883416" }],
  [{ v: "2" }, { v: "52.64", focused: true }, { v: "" }],
];

const DOCK = [
  [Finder, "#000"], [Siri], [Launchpad], [Chrome, "#000"], [Safari], [InDesign, "#000"], [Calendar, "#000"],
  [ITunes, "#000"], [Notes, "#000"], [Preferences], [Calculator, "#000"], [TeX, "#000"], [Acrobat, "#04040c"],
  [Mendeley, "#04040c"], [Word, "#060a18"], [RLogo, "#0c1022"], [Excel, "#1c1014"], [Xcode, "#3c1204"],
  [OmniGraffle, "#501a04"], [Grab, "#3a1004"],
];

/* ---------- Composition ---------- */

const Tab = ({ tab, index }) => {
  const { Icon, title, active } = tab;
  return (
    <TabBox $z={active ? 20 : 10 - index}>
      <TabShape width="305" height="57" viewBox="0 0 305 57">
        <path
          d="M0 56.500L24.500 3Q26 0.500 29 0.500H276Q279 0.500 280.500 3L305 56.500"
          fill={active ? "#f1f1f1" : "#d0d0d0"}
          stroke="#999"
          strokeWidth="1.200"
        />
        {!active && <path d="M0 55.500H305" stroke="#999" strokeWidth="1.200" />}
      </TabShape>
      <TabIcon><Icon /></TabIcon>
      <TabTitle>{title}</TabTitle>
      <TabClose width="15" height="15" viewBox="0 0 15 15" fill="none" stroke="#4c4c4c" strokeWidth="2.200">
        <path d="M1 1L14 14M14 1L1 14" />
      </TabClose>
    </TabBox>
  );
};

export default function App() {
  return (
    <Desktop>
      <GlobalStyle />

      <BackWindow $x={0} $w={2560} $bottom={1540} $bg="linear-gradient(180deg, #777 165px, #b4b4b4 195px, #dedede 240px)" />
      <BackWindow $x={400} $w={2160} $bottom={1464} $bg="#868686" />
      <BackWindow $x={0} $w={1958} $bottom={1462} $radius="0" $bg="linear-gradient(90deg, #b8b8b8 0, #8b8b8b 70px, #8b8b8b 100%)" />
      <Peek width="2560" height="100" viewBox="0 0 2560 100">
        <rect x="86" y="23.500" width="1480" height="8" fill="#777" />
        <rect x="1566" y="25.500" width="908" height="6" fill="#6a6a6a" />
        <path d="M45 24V100M2529 26V100" stroke="#8f8f8f" strokeWidth="1.500" />
        <path d="M195 23V27M327 23V27M396 23Q395 26 391 26M483 23Q482 26 478 26M889 23Q888 26 885 26" stroke="#8c2c24" strokeWidth="2" fill="none" />
        <path d="M527 25.500H612" stroke="#8f2f27" strokeWidth="5.500" strokeLinecap="round" strokeDasharray="0.100 7.900" />
      </Peek>

      <WindowShade />
      <MenuBar>
        <AppleMark><FaApple /></AppleMark>
        {MENUS.map(([label, w, bold]) => (
          <MenuItem key={label} $w={w} $bold={bold}>{label}</MenuItem>
        ))}
        <Extras>
          <Extra $w={58}><CreativeCloud /></Extra>
          <Extra $w={60}><Dropbox /></Extra>
          <Extra $w={75}><TimeMachine /></Extra>
          <Extra $w={66}><BluetoothGlyph /></Extra>
          <Extra $w={54}><WifiGlyph /></Extra>
          <Extra $w={72}><AirPlay /></Extra>
          <Percent>24%</Percent>
          <Extra $w={62}><Battery /></Extra>
          <Clock>Tue 16:37</Clock>
          <Extra $w={57}><SearchGlyph /></Extra>
          <Extra $w={69}><ListGlyph /></Extra>
        </Extras>
      </MenuBar>

      <Window>
        <TabStrip>
          <Lights>
            <Light $c="#ff5f57" $b="#e2463f" />
            <Light $c="#ffbd2e" $b="#e1a116" />
            <Light $c="#28ca42" $b="#12ab2b" />
          </Lights>
          {TABS.map((tab, i) => <Tab key={tab.title} tab={tab} index={i} />)}
          <NewTab width="66" height="33" viewBox="0 0 66 33">
            <path d="M3.500 1H49Q52 1 53 3.500L64 28Q65 31.500 62 31.500H17Q14 31.500 13 29L1.500 4Q0.500 1 3.500 1Z" fill="#d0d0d0" stroke="#a0a0a0" strokeWidth="1.200" />
          </NewTab>
          <Profile>Judith</Profile>
        </TabStrip>

        <Toolbar>
          <ToolButton><Arrow color="#6a6a6a" /></ToolButton>
          <ToolButton><Arrow flip color="#d0d0d0" /></ToolButton>
          <ToolButton><Reload /></ToolButton>
          <ToolButton><Home /></ToolButton>
          <Omnibox>
            <Info />
            <Address>localhost<em>/~judithborghouts/Study4/</em></Address>
            <Star />
          </Omnibox>
          <ToolButton><Waves /></ToolButton>
          <ToolButton><MendeleyExt /></ToolButton>
          <ToolButton><AdblockExt /></ToolButton>
          <ToolButton><GhostExt /></ToolButton>
          <ToolButton><Kebab /></ToolButton>
        </Toolbar>

        <Viewport>
          <Page>
            <PageTabs>
              <PageTab $active>
                Claim form
                <HandCursor width="32" height="36" viewBox="0 0 32 36">
                  <path
                    d="M9 2Q12 1 13 5L15.500 14Q16 11 18.500 11.500T21 14.500Q22 12.500 24 13.500T26 16Q28.500 15 29.500 17.500Q31 24 28 28L27 34H13Q12 30 8 26Q4 21 2.500 18Q2 14.500 5 15.500L9.500 20L7 6Q6.500 2.500 9 2Z"
                    fill="#fff" stroke="#000" strokeWidth="1.800" strokeLinejoin="round"
                  />
                  <path d="M16 21V28M20 21V28M24 21V28" stroke="#000" strokeWidth="1.600" />
                </HandCursor>
              </PageTab>
              <PageTab>Amount</PageTab>
              <PageTab>Account code</PageTab>
              <PageTab>Amount</PageTab>
              <PageTab>Account code</PageTab>
            </PageTabs>
            <Panel>
              <Title>Claim form</Title>
              <HeadRow>
                <span>Claim number</span>
                <span>Amount</span>
                <span>Account code</span>
              </HeadRow>
              <FieldGrid>
                {ROWS.flat().map((cell, i) => (
                  <Field key={i} $focused={cell.focused}>
                    {cell.v}
                    {cell.focused && <Caret />}
                  </Field>
                ))}
              </FieldGrid>
              <Submit>Submit</Submit>
            </Panel>
          </Page>
          <ScrollTrack><ScrollThumb /></ScrollTrack>
        </Viewport>
      </Window>

      <StatusBubble>javascript:void(0)</StatusBubble>

      <DockBar>
        {DOCK.map(([Icon, dot], i) => (
          <DockItem key={i}>
            <Icon />
            {dot && <RunDot $c={dot} />}
          </DockItem>
        ))}
        <Divider />
        <DockItem><CalendarDoc /></DockItem>
        <DockItem><Trash /></DockItem>
      </DockBar>
    </Desktop>
  );
}
